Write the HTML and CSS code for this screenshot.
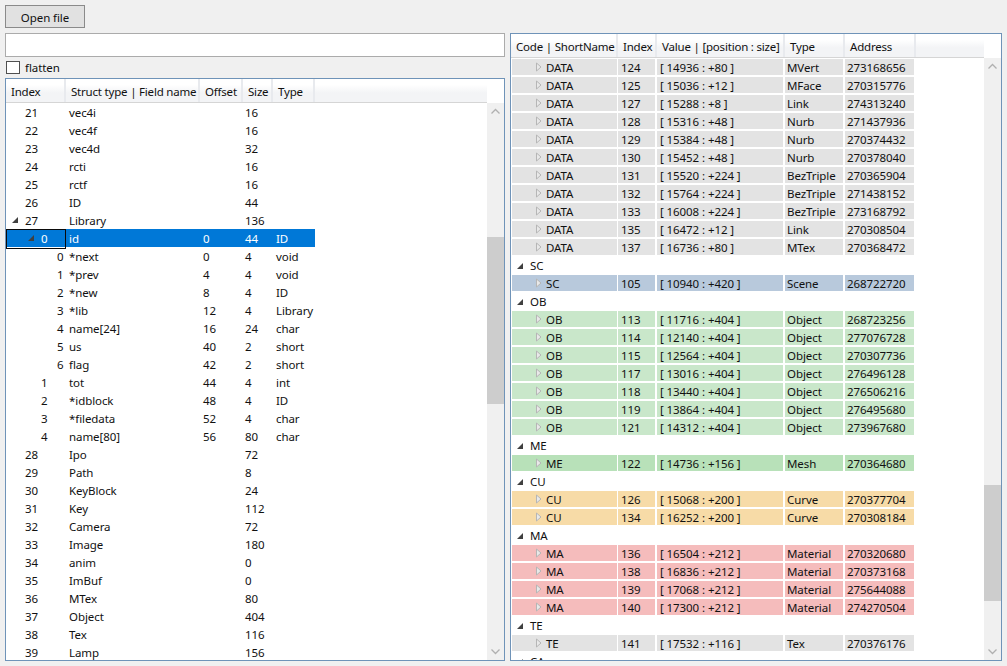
FILE: index.html
```html
<!DOCTYPE html>
<html>
<head>
<meta charset="utf-8">
<title>Struct viewer</title>
<link rel="stylesheet" href="styles.css">
</head>
<body>
<svg class="defs" width="0" height="0">
  <symbol id="open" viewBox="0 0 8 8"><path d="M7 1V7H1Z" fill="#404040"/></symbol>
  <symbol id="shut" viewBox="0 0 8 10"><path d="M1.5 1L6 5L1.5 9Z" fill="#e9e9e9" stroke="#b6b6b6"/></symbol>
  <symbol id="up" viewBox="0 0 17 17"><path d="M4.5 10.5L8.5 6.5L12.5 10.5" fill="none" stroke="#b0b0b0" stroke-width="1.3"/></symbol>
  <symbol id="down" viewBox="0 0 17 17"><path d="M4.5 6.5L8.5 10.5L12.5 6.5" fill="none" stroke="#b0b0b0" stroke-width="1.3"/></symbol>
</svg>
<div class="page">
  <button class="open-btn">Open file</button>
  <div class="panes">
    <div class="left-pane">
      <input class="search" type="text">
      <label class="flatten"><span class="box"></span>flatten</label>
      <div class="list left-list">
        <div class="list-main">
          <div class="head lgrid"><span>Index</span><span>Struct type | Field name</span><span>Offset</span><span>Size</span><span>Type</span></div>
          <div class="rows">
            <div class="row lgrid"><span class="i0">21</span><span>vec4i</span><span></span><span>16</span><span></span></div>
            <div class="row lgrid"><span class="i0">22</span><span>vec4f</span><span></span><span>16</span><span></span></div>
            <div class="row lgrid"><span class="i0">23</span><span>vec4d</span><span></span><span>32</span><span></span></div>
            <div class="row lgrid"><span class="i0">24</span><span>rcti</span><span></span><span>16</span><span></span></div>
            <div class="row lgrid"><span class="i0">25</span><span>rctf</span><span></span><span>16</span><span></span></div>
            <div class="row lgrid"><span class="i0">26</span><span>ID</span><span></span><span>44</span><span></span></div>
            <div class="row lgrid"><span class="i0"><svg class="tw a0"><use href="#open"/></svg>27</span><span>Library</span><span></span><span>136</span><span></span></div>
            <div class="row lgrid sel"><span class="i1 focus"><svg class="tw a1"><use href="#open"/></svg>0</span><span>id</span><span>0</span><span>44</span><span>ID</span></div>
            <div class="row lgrid"><span class="i2">0</span><span>*next</span><span>0</span><span>4</span><span>void</span></div>
            <div class="row lgrid"><span class="i2">1</span><span>*prev</span><span>4</span><span>4</span><span>void</span></div>
            <div class="row lgrid"><span class="i2">2</span><span>*new</span><span>8</span><span>4</span><span>ID</span></div>
            <div class="row lgrid"><span class="i2">3</span><span>*lib</span><span>12</span><span>4</span><span>Library</span></div>
            <div class="row lgrid"><span class="i2">4</span><span>name[24]</span><span>16</span><span>24</span><span>char</span></div>
            <div class="row lgrid"><span class="i2">5</span><span>us</span><span>40</span><span>2</span><span>short</span></div>
            <div class="row lgrid"><span class="i2">6</span><span>flag</span><span>42</span><span>2</span><span>short</span></div>
            <div class="row lgrid"><span class="i1">1</span><span>tot</span><span>44</span><span>4</span><span>int</span></div>
            <div class="row lgrid"><span class="i1">2</span><span>*idblock</span><span>48</span><span>4</span><span>ID</span></div>
            <div class="row lgrid"><span class="i1">3</span><span>*filedata</span><span>52</span><span>4</span><span>char</span></div>
            <div class="row lgrid"><span class="i1">4</span><span>name[80]</span><span>56</span><span>80</span><span>char</span></div>
            <div class="row lgrid"><span class="i0">28</span><span>Ipo</span><span></span><span>72</span><span></span></div>
            <div class="row lgrid"><span class="i0">29</span><span>Path</span><span></span><span>8</span><span></span></div>
            <div class="row lgrid"><span class="i0">30</span><span>KeyBlock</span><span></span><span>24</span><span></span></div>
            <div class="row lgrid"><span class="i0">31</span><span>Key</span><span></span><span>112</span><span></span></div>
            <div class="row lgrid"><span class="i0">32</span><span>Camera</span><span></span><span>72</span><span></span></div>
            <div class="row lgrid"><span class="i0">33</span><span>Image</span><span></span><span>180</span><span></span></div>
            <div class="row lgrid"><span class="i0">34</span><span>anim</span><span></span><span>0</span><span></span></div>
            <div class="row lgrid"><span class="i0">35</span><span>ImBuf</span><span></span><span>0</span><span></span></div>
            <div class="row lgrid"><span class="i0">36</span><span>MTex</span><span></span><span>80</span><span></span></div>
            <div class="row lgrid"><span class="i0">37</span><span>Object</span><span></span><span>404</span><span></span></div>
            <div class="row lgrid"><span class="i0">38</span><span>Tex</span><span></span><span>116</span><span></span></div>
            <div class="row lgrid"><span class="i0">39</span><span>Lamp</span><span></span><span>156</span><span></span></div>
          </div>
        </div>
        <div class="sbar-col">
          <div class="sbar sbar-left"><svg class="chev"><use href="#up"/></svg><div class="pre"></div><div class="thumb"></div><div class="post"></div><svg class="chev"><use href="#down"/></svg></div>
        </div>
      </div>
    </div>
    <div class="list right-list">
      <div class="list-main">
        <div class="head rgrid"><span>Code | ShortName</span><span>Index</span><span>Value | [position : size]</span><span>Type</span><span>Address</span></div>
        <div class="rows">
          <div class="row rgrid gray"><span class="kid"><svg class="tw2"><use href="#shut"/></svg>DATA</span><span>124</span><span>[ 14936 : +80 ]</span><span>MVert</span><span>273168656</span></div>
          <div class="row rgrid gray"><span class="kid"><svg class="tw2"><use href="#shut"/></svg>DATA</span><span>125</span><span>[ 15036 : +12 ]</span><span>MFace</span><span>270315776</span></div>
          <div class="row rgrid gray"><span class="kid"><svg class="tw2"><use href="#shut"/></svg>DATA</span><span>127</span><span>[ 15288 : +8 ]</span><span>Link</span><span>274313240</span></div>
          <div class="row rgrid gray"><span class="kid"><svg class="tw2"><use href="#shut"/></svg>DATA</span><span>128</span><span>[ 15316 : +48 ]</span><span>Nurb</span><span>271437936</span></div>
          <div class="row rgrid gray"><span class="kid"><svg class="tw2"><use href="#shut"/></svg>DATA</span><span>129</span><span>[ 15384 : +48 ]</span><span>Nurb</span><span>270374432</span></div>
          <div class="row rgrid gray"><span class="kid"><svg class="tw2"><use href="#shut"/></svg>DATA</span><span>130</span><span>[ 15452 : +48 ]</span><span>Nurb</span><span>270378040</span></div>
          <div class="row rgrid gray"><span class="kid"><svg class="tw2"><use href="#shut"/></svg>DATA</span><span>131</span><span>[ 15520 : +224 ]</span><span>BezTriple</span><span>270365904</span></div>
          <div class="row rgrid gray"><span class="kid"><svg class="tw2"><use href="#shut"/></svg>DATA</span><span>132</span><span>[ 15764 : +224 ]</span><span>BezTriple</span><span>271438152</span></div>
          <div class="row rgrid gray"><span class="kid"><svg class="tw2"><use href="#shut"/></svg>DATA</span><span>133</span><span>[ 16008 : +224 ]</span><span>BezTriple</span><span>273168792</span></div>
          <div class="row rgrid gray"><span class="kid"><svg class="tw2"><use href="#shut"/></svg>DATA</span><span>135</span><span>[ 16472 : +12 ]</span><span>Link</span><span>270308504</span></div>
          <div class="row rgrid gray"><span class="kid"><svg class="tw2"><use href="#shut"/></svg>DATA</span><span>137</span><span>[ 16736 : +80 ]</span><span>MTex</span><span>270368472</span></div>
          <div class="row group"><svg class="tw a2"><use href="#open"/></svg>SC</div>
          <div class="row rgrid blue"><span class="kid"><svg class="tw2"><use href="#shut"/></svg>SC</span><span>105</span><span>[ 10940 : +420 ]</span><span>Scene</span><span>268722720</span></div>
          <div class="row group"><svg class="tw a2"><use href="#open"/></svg>OB</div>
          <div class="row rgrid green"><span class="kid"><svg class="tw2"><use href="#shut"/></svg>OB</span><span>113</span><span>[ 11716 : +404 ]</span><span>Object</span><span>268723256</span></div>
          <div class="row rgrid green"><span class="kid"><svg class="tw2"><use href="#shut"/></svg>OB</span><span>114</span><span>[ 12140 : +404 ]</span><span>Object</span><span>277076728</span></div>
          <div class="row rgrid green"><span class="kid"><svg class="tw2"><use href="#shut"/></svg>OB</span><span>115</span><span>[ 12564 : +404 ]</span><span>Object</span><span>270307736</span></div>
          <div class="row rgrid green"><span class="kid"><svg class="tw2"><use href="#shut"/></svg>OB</span><span>117</span><span>[ 13016 : +404 ]</span><span>Object</span><span>276496128</span></div>
          <div class="row rgrid green"><span class="kid"><svg class="tw2"><use href="#shut"/></svg>OB</span><span>118</span><span>[ 13440 : +404 ]</span><span>Object</span><span>276506216</span></div>
          <div class="row rgrid green"><span class="kid"><svg class="tw2"><use href="#shut"/></svg>OB</span><span>119</span><span>[ 13864 : +404 ]</span><span>Object</span><span>276495680</span></div>
          <div class="row rgrid green"><span class="kid"><svg class="tw2"><use href="#shut"/></svg>OB</span><span>121</span><span>[ 14312 : +404 ]</span><span>Object</span><span>273967680</span></div>
          <div class="row group"><svg class="tw a2"><use href="#open"/></svg>ME</div>
          <div class="row rgrid mesh"><span class="kid"><svg class="tw2"><use href="#shut"/></svg>ME</span><span>122</span><span>[ 14736 : +156 ]</span><span>Mesh</span><span>270364680</span></div>
          <div class="row group"><svg class="tw a2"><use href="#open"/></svg>CU</div>
          <div class="row rgrid orange"><span class="kid"><svg class="tw2"><use href="#shut"/></svg>CU</span><span>126</span><span>[ 15068 : +200 ]</span><span>Curve</span><span>270377704</span></div>
          <div class="row rgrid orange"><span class="kid"><svg class="tw2"><use href="#shut"/></svg>CU</span><span>134</span><span>[ 16252 : +200 ]</span><span>Curve</span><span>270308184</span></div>
          <div class="row group"><svg class="tw a2"><use href="#open"/></svg>MA</div>
          <div class="row rgrid red"><span class="kid"><svg class="tw2"><use href="#shut"/></svg>MA</span><span>136</span><span>[ 16504 : +212 ]</span><span>Material</span><span>270320680</span></div>
          <div class="row rgrid red"><span class="kid"><svg class="tw2"><use href="#shut"/></svg>MA</span><span>138</span><span>[ 16836 : +212 ]</span><span>Material</span><span>270373168</span></div>
          <div class="row rgrid red"><span class="kid"><svg class="tw2"><use href="#shut"/></svg>MA</span><span>139</span><span>[ 17068 : +212 ]</span><span>Material</span><span>275644088</span></div>
          <div class="row rgrid red"><span class="kid"><svg class="tw2"><use href="#shut"/></svg>MA</span><span>140</span><span>[ 17300 : +212 ]</span><span>Material</span><span>274270504</span></div>
          <div class="row group"><svg class="tw a2"><use href="#open"/></svg>TE</div>
          <div class="row rgrid gray"><span class="kid"><svg class="tw2"><use href="#shut"/></svg>TE</span><span>141</span><span>[ 17532 : +116 ]</span><span>Tex</span><span>270376176</span></div>
          <div class="row group"><svg class="tw a2"><use href="#open"/></svg>CA</div>
        </div>
      </div>
      <div class="sbar-col">
        <div class="sbar sbar-right"><svg class="chev"><use href="#up"/></svg><div class="pre"></div><div class="thumb"></div><div class="post"></div><svg class="chev"><use href="#down"/></svg></div>
      </div>
    </div>
  </div>
</div>
</body>
</html>
```

FILE: styles.css
```css
* { box-sizing: border-box; }
html, body { margin: 0; height: 100%; overflow: hidden; }
body { background: #f0f0f0; font: 11.5px/20px "Noto Sans", sans-serif; color: #111; letter-spacing: -0.08px; }
.defs { position: absolute; }
.page { height: 666px; padding: 5px; display: flex; flex-direction: column; gap: 5px; }
.open-btn {
  width: 80px; height: 23px; padding: 2px 0 0;
  background: #e1e1e1; border: 1px solid #8a8a8a;
  font: inherit; line-height: 18px; letter-spacing: inherit; color: #111;
}
.panes { flex: 1; min-height: 0; display: grid; grid-template-columns: 500px 492px; gap: 5px; }
.left-pane { display: flex; flex-direction: column; min-height: 0; }
.search { height: 24px; flex: none; background: #fff; border: 1px solid #ababab; padding: 0; }
.flatten { height: 21px; flex: none; display: flex; align-items: center; gap: 5px; padding-left: 1px; }
.box { width: 14px; height: 13px; background: #fff; border: 1px solid #505050; }
.list { flex: 1; min-height: 0; display: flex; background: #fff; border: 1px solid #6f93b8; overflow: hidden; }
.list-main { flex: 1; min-width: 0; display: flex; flex-direction: column; }
.head {
  flex: none; height: 24px; line-height: 25px; letter-spacing: -0.2px;
  background: linear-gradient(#fff 0, #fff 25%, #f3f4f6 60%, #f3f4f6 100%);
  border-bottom: 1px solid #d5d5d5;
}
.head span { border-right: 2px solid #e8eaee; white-space: nowrap; overflow: hidden; }
.rows { flex: 1; min-height: 0; overflow: hidden; }
.row { height: 18px; white-space: nowrap; }
.lgrid { display: grid; grid-template-columns: 60px 134px 43px 30px 42px; }
.row.lgrid { width: 309px; }
.left-list .head span { padding-left: 5px; }
.left-list .row span { padding-left: 3px; }
.left-list .row span:nth-child(4) { padding-left: 2px; }
.left-list .row span.i0 { padding-left: 19px; position: relative; }
.left-list .row span.i1 { padding-left: 35px; position: relative; }
.left-list .row span.i2 { padding-left: 51px; }
.left-list .row span.focus { padding-left: 34px; }
.sel { background: #0078d7; color: #fff; }
.focus { border: 1px solid #0a0a0a; line-height: 18px; }
.tw { position: absolute; width: 8px; height: 8px; }
.a0 { left: 5px; top: 5px; }
.a1 { left: 20px; top: 4px; }
.group { position: relative; padding-left: 19px; }
.a2 { left: 5px; top: 6px; }
.rgrid { display: grid; grid-template-columns: 107px 39px 128px 60px 71px; }
.right-list .head span { padding-left: 5px; }
.right-list .row.rgrid { padding-top: 1px; line-height: 18px; height: 18px; }
.right-list .row.rgrid span {
  height: 16px; margin-right: 2px; padding-left: 3px; overflow: hidden;
  background: var(--fill);
}
.right-list .row.rgrid span:nth-child(n+4) { padding-left: 2px; }
.right-list .row.rgrid span:first-child { margin-left: 1px; margin-right: 1px; position: relative; padding-left: 34px; }
.tw2 { position: absolute; left: 23px; top: 3px; width: 8px; height: 10px; }
.gray { --fill: #e3e3e3; }
.blue { --fill: #b8c9dc; }
.green { --fill: #c9e7ca; }
.mesh { --fill: #b8e1b9; }
.orange { --fill: #f7dba7; }
.red { --fill: #f5bcbc; }
.sbar-col { flex: none; width: 17px; display: flex; flex-direction: column; padding-top: 24px; }
.sbar { flex: 1; min-height: 0; display: flex; flex-direction: column; background: #f0f0f0; }
.chev { flex: none; width: 17px; height: 17px; }
.thumb { flex: none; background: #cdcdcd; }
.post { flex: 1; }
.sbar-left .pre { height: 117px; }
.sbar-left .thumb { height: 167px; }
.sbar-right .pre { height: 410px; }
.sbar-right .thumb { height: 116px; }
```
